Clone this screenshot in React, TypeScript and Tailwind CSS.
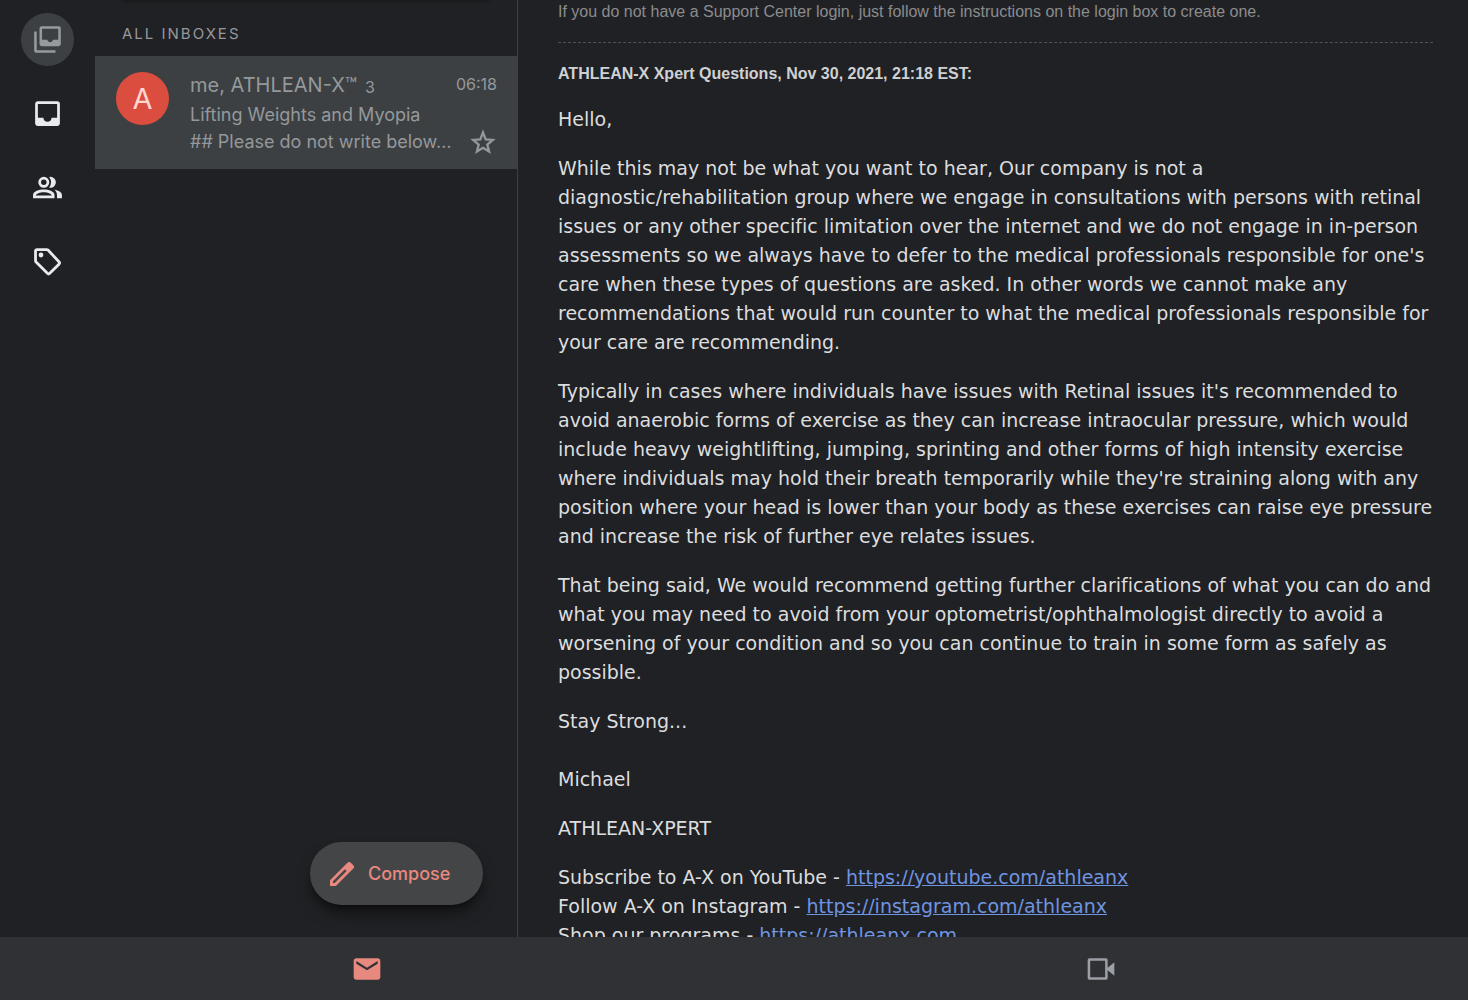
import React from 'react';
import { MdInbox, MdEmail } from 'react-icons/md';

interface IconProps {
  size?: number;
}

const AllInboxesIcon: React.FC<IconProps> = ({ size = 32 }) => (
  <svg width={size} height={size} viewBox="-0.4 -0.4 24.8 24.8" fill="currentColor" aria-hidden="true">
    <path
      fillRule="evenodd"
      d="M7.6 2h12.8A1.6 1.6 0 0 1 22 3.600v11.800a1.600 1.600 0 0 1-1.600 1.600H7.600A1.600 1.600 0 0 1 6 15.400V3.600A1.600 1.600 0 0 1 7.600 2zM7.900 3.900v8.300h3.900c.3 1.100 1.200 1.900 2.200 1.900s1.900-.8 2.200-1.900h3.900V3.900z"
    />
    <path d="M2 6h1.900v14.100H18V22H3.600A1.600 1.600 0 0 1 2 20.400z" />
  </svg>
);

const PeopleIcon: React.FC<IconProps> = ({ size = 32 }) => (
  <svg width={size} height={size} viewBox="0 0 24 24" fill="currentColor" aria-hidden="true">
    <path
      fillRule="evenodd"
      d="M9.300 4.200a4 4 0 1 1 0 8 4 4 0 0 1 0-8zm0 2a2 2 0 1 0 0 4 2 2 0 0 0 0-4z"
    />
    <path
      fillRule="evenodd"
      d="M1.500 19.800v-2.300c0-2.700 4.300-4 7.800-4s7.800 1.300 7.800 4v2.300zM3.500 17.800h11.600c-.2-1.200-3-2.300-5.800-2.300s-5.600 1.100-5.800 2.300z"
    />
    <path d="M14.100 4.200a4 4 0 0 1 0 8q-.5 0-.9-.1a6.200 6.200 0 0 0 0-7.800q.4-.1.900-.1z" />
    <path d="M17 13.700c2.900.4 5.500 1.700 5.500 3.900v2.200h-3.600v-2.300c0-1.600-.7-2.800-1.900-3.800z" />
  </svg>
);

const TagIcon: React.FC<IconProps> = ({ size = 32 }) => (
  <svg width={size} height={size} viewBox="-0.4 -0.4 24.8 24.8" aria-hidden="true">
    <path
      d="M3 4.200V11.500q0 .5.400.9l8.500 8.500q.9.900 1.800 0l6.900-6.900q.9-.9 0-1.800L12.400 3.400q-.4-.4-1-.4H4.200Q3 3 3 4.200z"
      fill="none"
      stroke="currentColor"
      strokeWidth="2.100"
    />
    <circle cx="7.100" cy="7.100" r="1.800" fill="currentColor" />
  </svg>
);

const StarIcon: React.FC<IconProps> = ({ size = 28 }) => (
  <svg width={size} height={size} viewBox="0 0 24 24" aria-hidden="true">
    <path
      d="M12 3.800l2.300 5.900 6.100.5-4.700 4 1.500 6L12 17l-5.200 3.200 1.500-6-4.700-4 6.100-.5z"
      fill="none"
      stroke="currentColor"
      strokeWidth="2"
    />
  </svg>
);

const PencilIcon: React.FC<IconProps> = ({ size = 32 }) => (
  <svg width={size} height={size} viewBox="0 0 24 24" fill="currentColor" aria-hidden="true">
    <path
      fillRule="evenodd"
      d="M3 16.600V21h4.400L20.300 8.100a2 2 0 0 0 0-2.900l-1.500-1.500a2 2 0 0 0-2.900 0zM5.200 18.800v-1.300L14.200 8.500l1.300 1.300-9 9z"
    />
  </svg>
);

const MeetIcon: React.FC<IconProps> = ({ size = 32 }) => (
  <svg width={size} height={size} viewBox="0 0 24 24" fill="currentColor" aria-hidden="true">
    <path
      fillRule="evenodd"
      d="M3.300 4h12.400A1.300 1.300 0 0 1 17 5.300V11l5-4v10l-5-4v5.700a1.300 1.300 0 0 1-1.300 1.300H3.300A1.300 1.300 0 0 1 2 18.700V5.300A1.300 1.300 0 0 1 3.300 4zM3.900 5.900v12.200h11.200V5.900z"
    />
  </svg>
);

const folders = [
  { label: 'All inboxes', icon: AllInboxesIcon, active: true },
  { label: 'Primary', icon: MdInbox, active: false },
  { label: 'Social', icon: PeopleIcon, active: false },
  { label: 'Promotions', icon: TagIcon, active: false },
];

const links = [
  { label: 'Subscribe to A-X on YouTube', url: 'https://youtube.com/athleanx' },
  { label: 'Follow A-X on Instagram', url: 'https://instagram.com/athleanx' },
  { label: 'Shop our programs', url: 'https://athleanx.com' },
];

const FolderRail: React.FC = () => (
  <nav className="w-[95px] shrink-0 flex flex-col items-center gap-[21px] pt-[13px]">
    {folders.map(({ label, icon: Icon, active }) => (
      <button
        key={label}
        aria-label={label}
        className={`w-[53px] h-[53px] rounded-full flex items-center justify-center ${
          active ? 'bg-[#3c4043] text-[#969a9e]' : 'text-[#e8eaed]'
        }`}
      >
        <Icon size={33} />
      </button>
    ))}
  </nav>
);

const ThreadList: React.FC = () => (
  <section className="relative w-[423px] shrink-0 border-r border-[#3f4043]">
    <div className="mx-7 h-px bg-[#19191b] shadow-sm shadow-black/40" />
    <h2 className="h-[55px] pl-[27px] pt-[21px] text-[15px] leading-6 tracking-[2px] text-[#96989c]">
      ALL INBOXES
    </h2>
    <article className="h-[113px] flex bg-[#3c4043] pl-[21px] pr-5 pt-4 text-[#95989b]">
      <div className="w-[53px] h-[53px] shrink-0 rounded-full bg-[#db4e3f] flex items-center justify-center text-[29px] text-[#ffd6d0]">
        A
      </div>
      <div className="ml-[21px] flex-1 min-w-0">
        <div className="flex items-start">
          <span className="text-xl leading-[26px]">me, ATHLEAN-X™</span>
          <span className="ml-2 text-base leading-[30px]">3</span>
          <time className="ml-auto text-base leading-6">06:18</time>
        </div>
        <p className="text-lg leading-[26px]">Lifting Weights and Myopia</p>
        <div className="flex items-center">
          <p className="flex-1 text-lg leading-6">## Please do not write below…</p>
          <button aria-label="Star">
            <StarIcon />
          </button>
        </div>
      </div>
    </article>
    <button className="absolute right-[34px] bottom-8 h-[63px] w-[173px] rounded-full bg-[#444547] pl-4 flex items-center gap-[10px] text-[#e8897f] text-lg font-medium shadow-lg shadow-black/50">
      <PencilIcon />
      Compose
    </button>
  </section>
);

const Message: React.FC = () => (
  <main className="flex-1 min-w-0 overflow-hidden pl-10 pr-[35px] font-['DejaVu_Sans',sans-serif] text-[19px] leading-[29px] text-[#dcdddf] [font-variant-ligatures:none]">
    <p className="pt-[2px] font-['Liberation_Sans',sans-serif] text-base leading-5 text-[#8b8c8e]">
      If you do not have a Support Center login, just follow the instructions on the login box to create one.
    </p>
    <hr className="mt-5 border-0 border-t border-dashed border-[#505154]" />
    <h1 className="mt-5 font-['Liberation_Sans',sans-serif] text-base leading-[22px] font-bold text-[#cfd0d2]">
      ATHLEAN-X Xpert Questions, Nov 30, 2021, 21:18 EST:
    </h1>
    <div className="mt-5 space-y-5">
      <p>Hello,</p>
      <p>
        While this may not be what you want to hear, Our company is not a
        diagnostic/rehabilitation group where we engage in consultations with persons with retinal
        issues or any other specific limitation over the internet and we do not engage in in-person
        assessments so we always have to defer to the medical professionals responsible for one's
        care when these types of questions are asked. In other words we cannot make any
        recommendations that would run counter to what the medical professionals responsible for
        your care are recommending.
      </p>
      <p>
        Typically in cases where individuals have issues with Retinal issues it's recommended to
        avoid anaerobic forms of exercise as they can increase intraocular pressure, which would
        include heavy weightlifting, jumping, sprinting and other forms of high intensity exercise
        where individuals may hold their breath temporarily while they're straining along with any
        position where your head is lower than your body as these exercises can raise eye pressure
        and increase the risk of further eye relates issues.
      </p>
      <p>
        That being said, We would recommend getting further clarifications of what you can do and
        what you may need to avoid from your optometrist/ophthalmologist directly to avoid a
        worsening of your condition and so you can continue to train in some form as safely as
        possible.
      </p>
      <p>
        Stay Strong...
        <br />
        <br />
        Michael
      </p>
      <p>ATHLEAN-XPERT</p>
      <ul>
        {links.map((link) => (
          <li key={link.url}>
            {link.label} -{' '}
            <a href={link.url} className="text-[#6f94e0] underline">
              {link.url}
            </a>
          </li>
        ))}
      </ul>
    </div>
  </main>
);

const App: React.FC = () => (
  <div className="h-screen flex flex-col bg-[#202124] font-['Inter',sans-serif]">
    <div className="flex-1 min-h-0 flex">
      <FolderRail />
      <ThreadList />
      <Message />
    </div>
    <footer className="h-[63px] shrink-0 grid grid-cols-2 bg-[#303135]">
      <button aria-label="Mail" className="flex items-center justify-center text-[#e8897f]">
        <MdEmail size={32} />
      </button>
      <button aria-label="Meet" className="flex items-center justify-center text-[#9aa0a6]">
        <MeetIcon />
      </button>
    </footer>
  </div>
);

export default App;
